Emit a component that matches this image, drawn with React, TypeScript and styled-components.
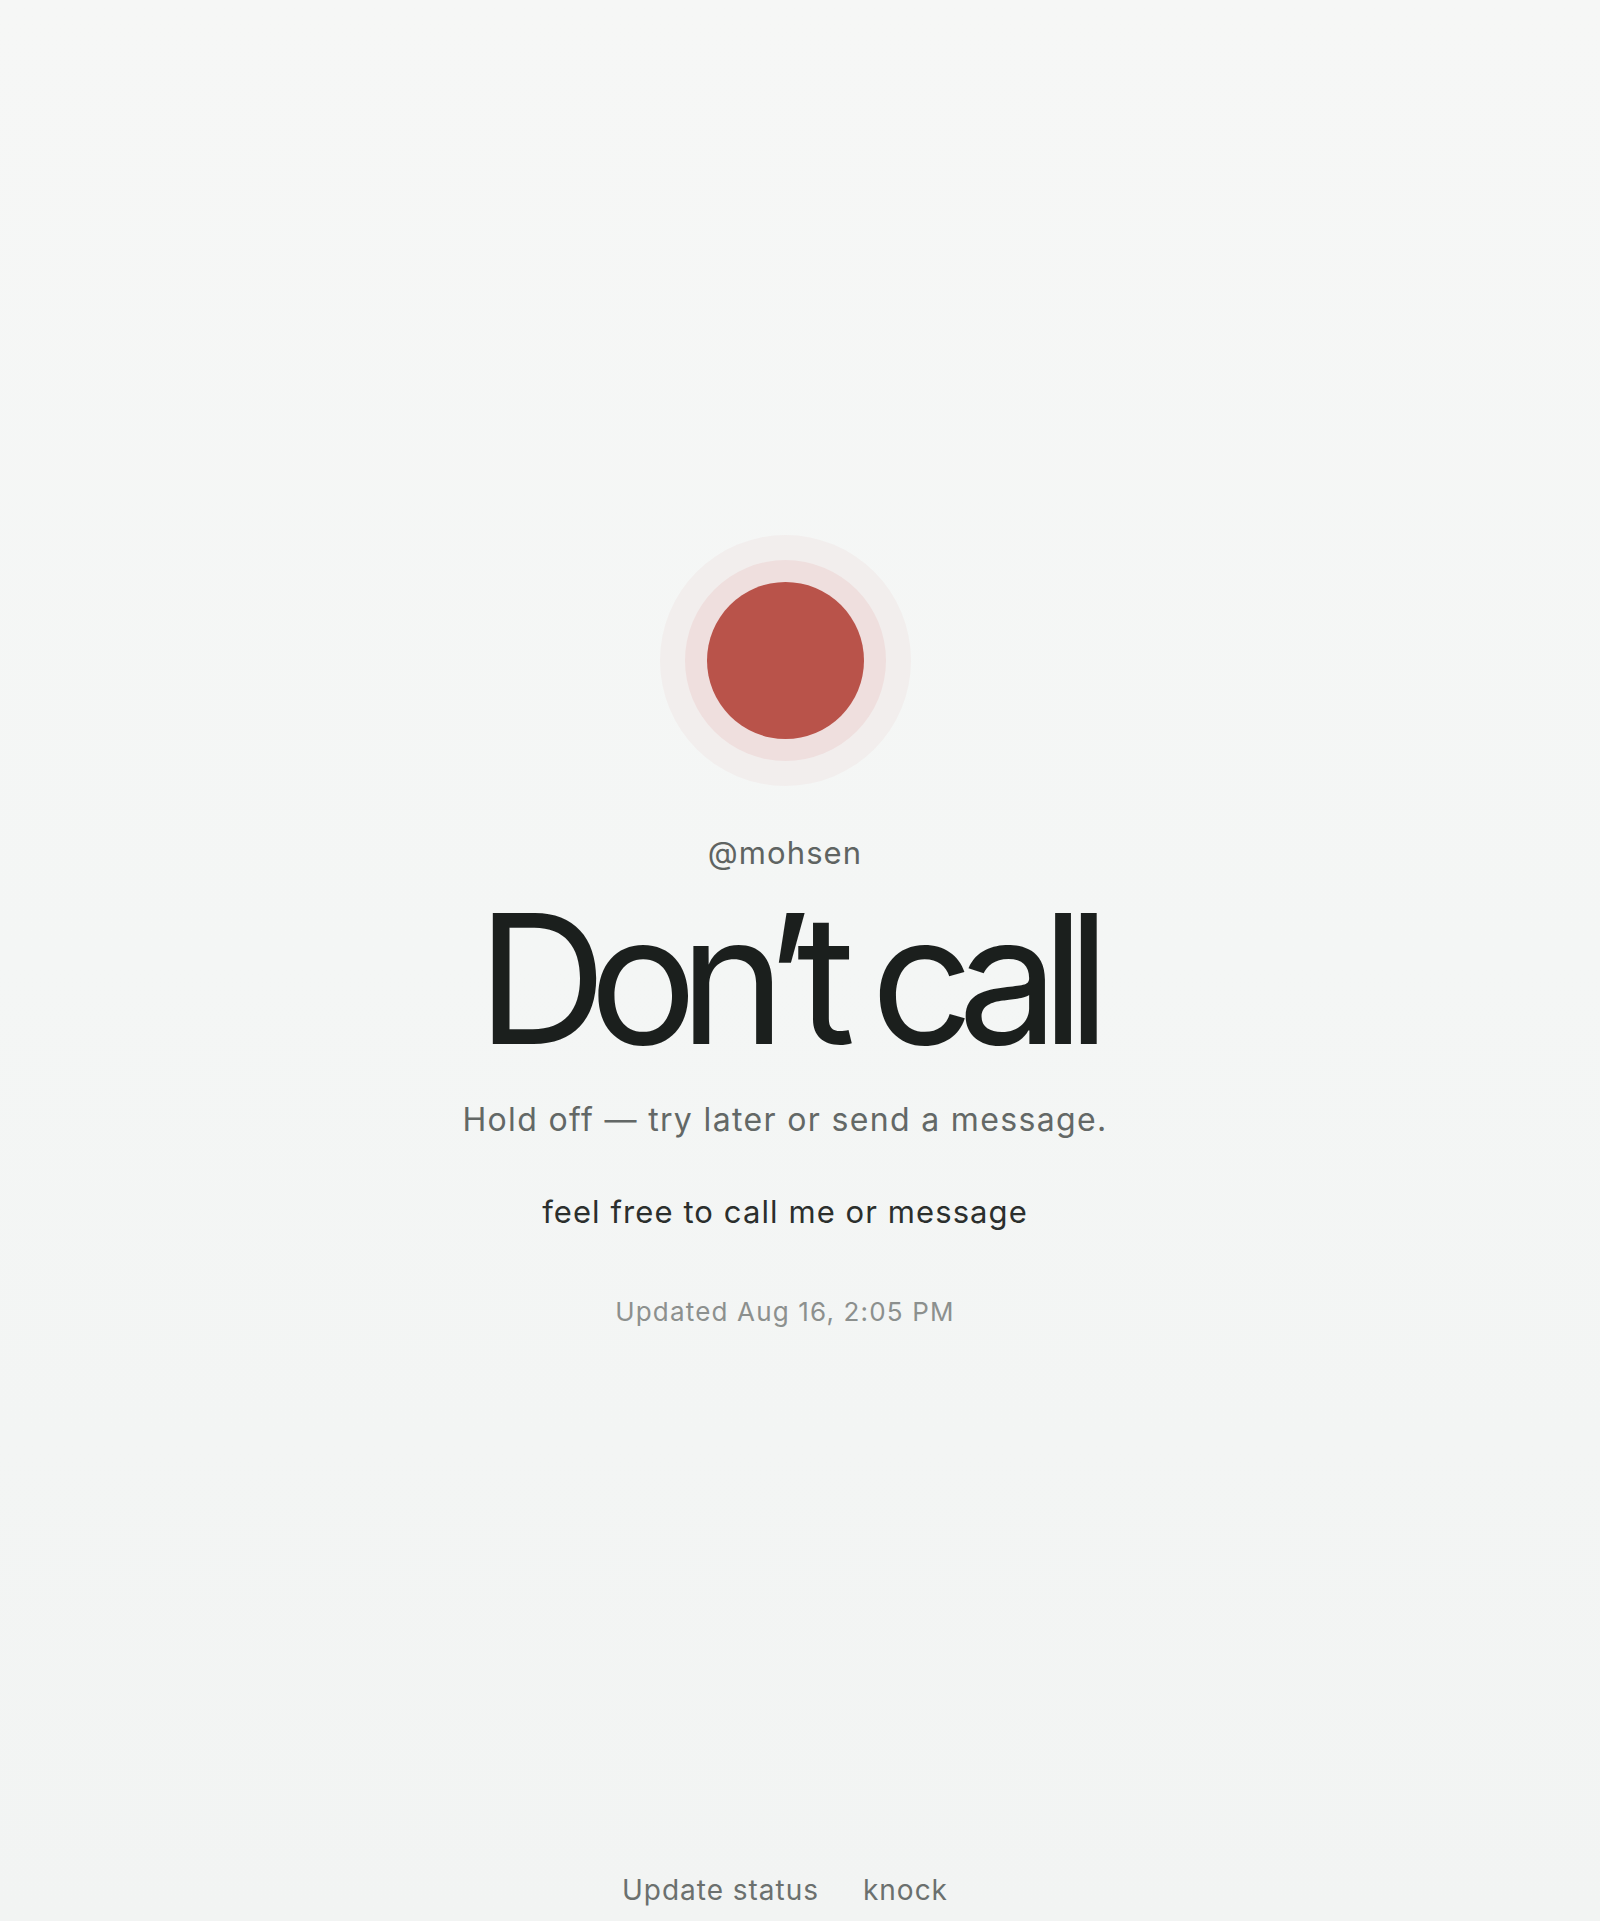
import React from 'react';
import styled, { createGlobalStyle } from 'styled-components';

const GlobalStyle = createGlobalStyle`
  html, body {
    margin: 0;
    padding: 0;
  }
  body {
    background: linear-gradient(180deg, #f6f7f6 0%, #f4f6f5 50%, #f2f4f3 100%);
    font-family: Inter, "Noto Sans", "Liberation Sans", sans-serif;
    -webkit-font-smoothing: antialiased;
  }
`;

const Page = styled.div`
  min-height: 100vh;
  box-sizing: border-box;
  padding-right: 30px;
  display: flex;
  flex-direction: column;
`;

const Main = styled.main`
  flex: 1;
  display: flex;
  flex-direction: column;
  align-items: center;
  justify-content: center;
  text-align: center;
`;

const Pulse = styled.div<{ $color: string }>`
  width: 157px;
  height: 157px;
  margin: 47px;
  border-radius: 50%;
  background: ${p => p.$color};
  box-shadow: 0 0 0 22px #efdfde, 0 0 0 47px #f2eeed;
`;

const Handle = styled.div`
  margin-top: 51px;
  font-size: 31px;
  line-height: 1;
  letter-spacing: 0.035em;
  color: #5f6462;
`;

const Title = styled.h1`
  margin: 21px 0 0;
  font-size: 180px;
  line-height: 1;
  font-weight: 400;
  letter-spacing: -0.098em;
  color: #1b1f1d;
`;

const Subtitle = styled.p`
  margin: 35px 0 0;
  font-size: 32px;
  line-height: 1;
  letter-spacing: 0.042em;
  color: #636866;
`;

const Note = styled.p`
  margin: 60px 0 0;
  font-size: 31px;
  line-height: 1;
  letter-spacing: 0.035em;
  color: #2b2f2d;
`;

const Updated = styled.div`
  margin-top: 72px;
  font-size: 26px;
  line-height: 1;
  letter-spacing: 0.045em;
  color: #8c908e;
`;

const Footer = styled.footer`
  display: flex;
  justify-content: center;
  gap: 44px;
  padding: 17px 0;
`;

const FooterLink = styled.a`
  font-size: 28px;
  line-height: 1;
  letter-spacing: 0.035em;
  color: #6b706e;
  text-decoration: none;
  cursor: pointer;
`;

const status = {
    handle: '@mohsen',
    title: 'Don’t call',
    subtitle: 'Hold off — try later or send a message.',
    note: 'feel free to call me or message',
    updated: 'Updated Aug 16, 2:05 PM',
    color: '#b9534a',
};

const App: React.FC = () => {
    return (
        <>
            <GlobalStyle/>
            <Page>
                <Main>
                    <Pulse $color={status.color}/>
                    <Handle>{status.handle}</Handle>
                    <Title>{status.title}</Title>
                    <Subtitle>{status.subtitle}</Subtitle>
                    <Note>{status.note}</Note>
                    <Updated>{status.updated}</Updated>
                </Main>
                <Footer>
                    <FooterLink>Update status</FooterLink>
                    <FooterLink>knock</FooterLink>
                </Footer>
            </Page>
        </>
    );
};

export default App;
